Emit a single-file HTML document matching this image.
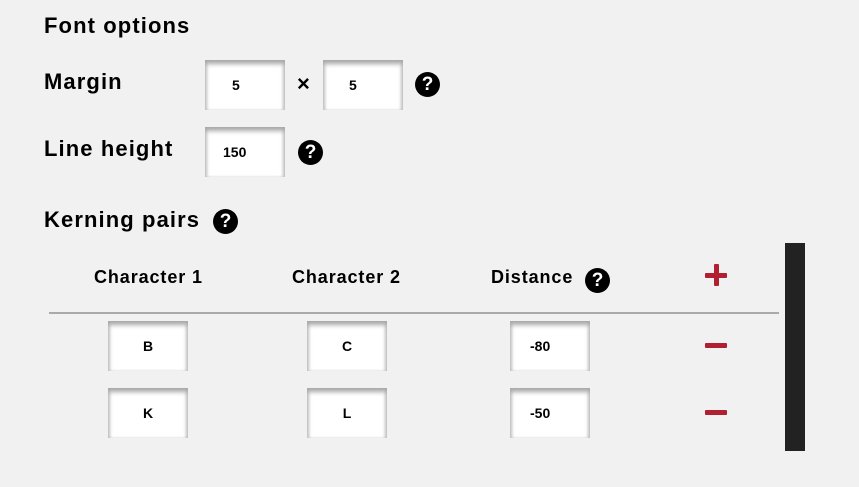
<!DOCTYPE html>
<html><head><style>
body{margin:0;width:859px;height:487px;background:#f1f1f1;font-family:"Liberation Sans",sans-serif;position:relative;overflow:hidden;color:#000}
.t{position:absolute;font-weight:bold;white-space:nowrap}
.big{font-size:22px;letter-spacing:1.1px}
.hd{font-size:18px;letter-spacing:0.9px}
.in{position:absolute;width:80px;height:50px;background:#fff;box-shadow:inset 0 5px 5px -1px #a8a8a8,inset 3px 0 3px -1px #c8c8c8,inset -3px 0 3px -1px #c8c8c8;font-size:14px;font-weight:bold;box-sizing:border-box;line-height:50px}
.q{position:absolute;width:25px;height:25px;border-radius:50%;background:#000;color:#fff;font-weight:bold;font-size:19px;text-align:center;line-height:25px}
.m{position:absolute;width:22px;height:5px;background:#b02030;border-radius:1px}
</style></head><body>
<div class="t big" style="left:44px;top:13px">Font options</div>
<div class="t big" style="left:44px;top:69px">Margin</div>
<div class="in" style="left:205px;top:60px;padding-left:27px">5</div>
<div class="t" style="left:297px;top:71px;font-size:22px">×</div>
<div class="in" style="left:323px;top:60px;padding-left:26px">5</div>
<div class="q" style="left:415px;top:72px">?</div>
<div class="t big" style="left:44px;top:136px">Line height</div>
<div class="in" style="left:205px;top:127px;padding-left:18px">150</div>
<div class="q" style="left:298px;top:140px">?</div>
<div class="t big" style="left:44px;top:207px">Kerning pairs</div>
<div class="q" style="left:213px;top:209px">?</div>
<div class="t hd" style="left:94px;top:267px">Character 1</div>
<div class="t hd" style="left:292px;top:267px">Character 2</div>
<div class="t hd" style="left:491px;top:267px">Distance</div>
<div class="q" style="left:585px;top:268px">?</div>
<div class="m" style="left:705px;top:273px"></div>
<div class="m" style="left:714px;top:264px;width:5px;height:22px"></div>
<div style="position:absolute;left:49px;top:312px;width:730px;height:2px;background:#aaa"></div>
<div class="in" style="left:108px;top:321px;text-align:center">B</div>
<div class="in" style="left:307px;top:321px;text-align:center">C</div>
<div class="in" style="left:510px;top:321px;padding-left:20px">-80</div>
<div class="m" style="left:705px;top:343px"></div>
<div class="in" style="left:108px;top:388px;text-align:center">K</div>
<div class="in" style="left:307px;top:388px;text-align:center">L</div>
<div class="in" style="left:510px;top:388px;padding-left:20px">-50</div>
<div class="m" style="left:705px;top:410px"></div>
<div style="position:absolute;left:785px;top:243px;width:20px;height:208px;background:#222"></div>
</body></html>
